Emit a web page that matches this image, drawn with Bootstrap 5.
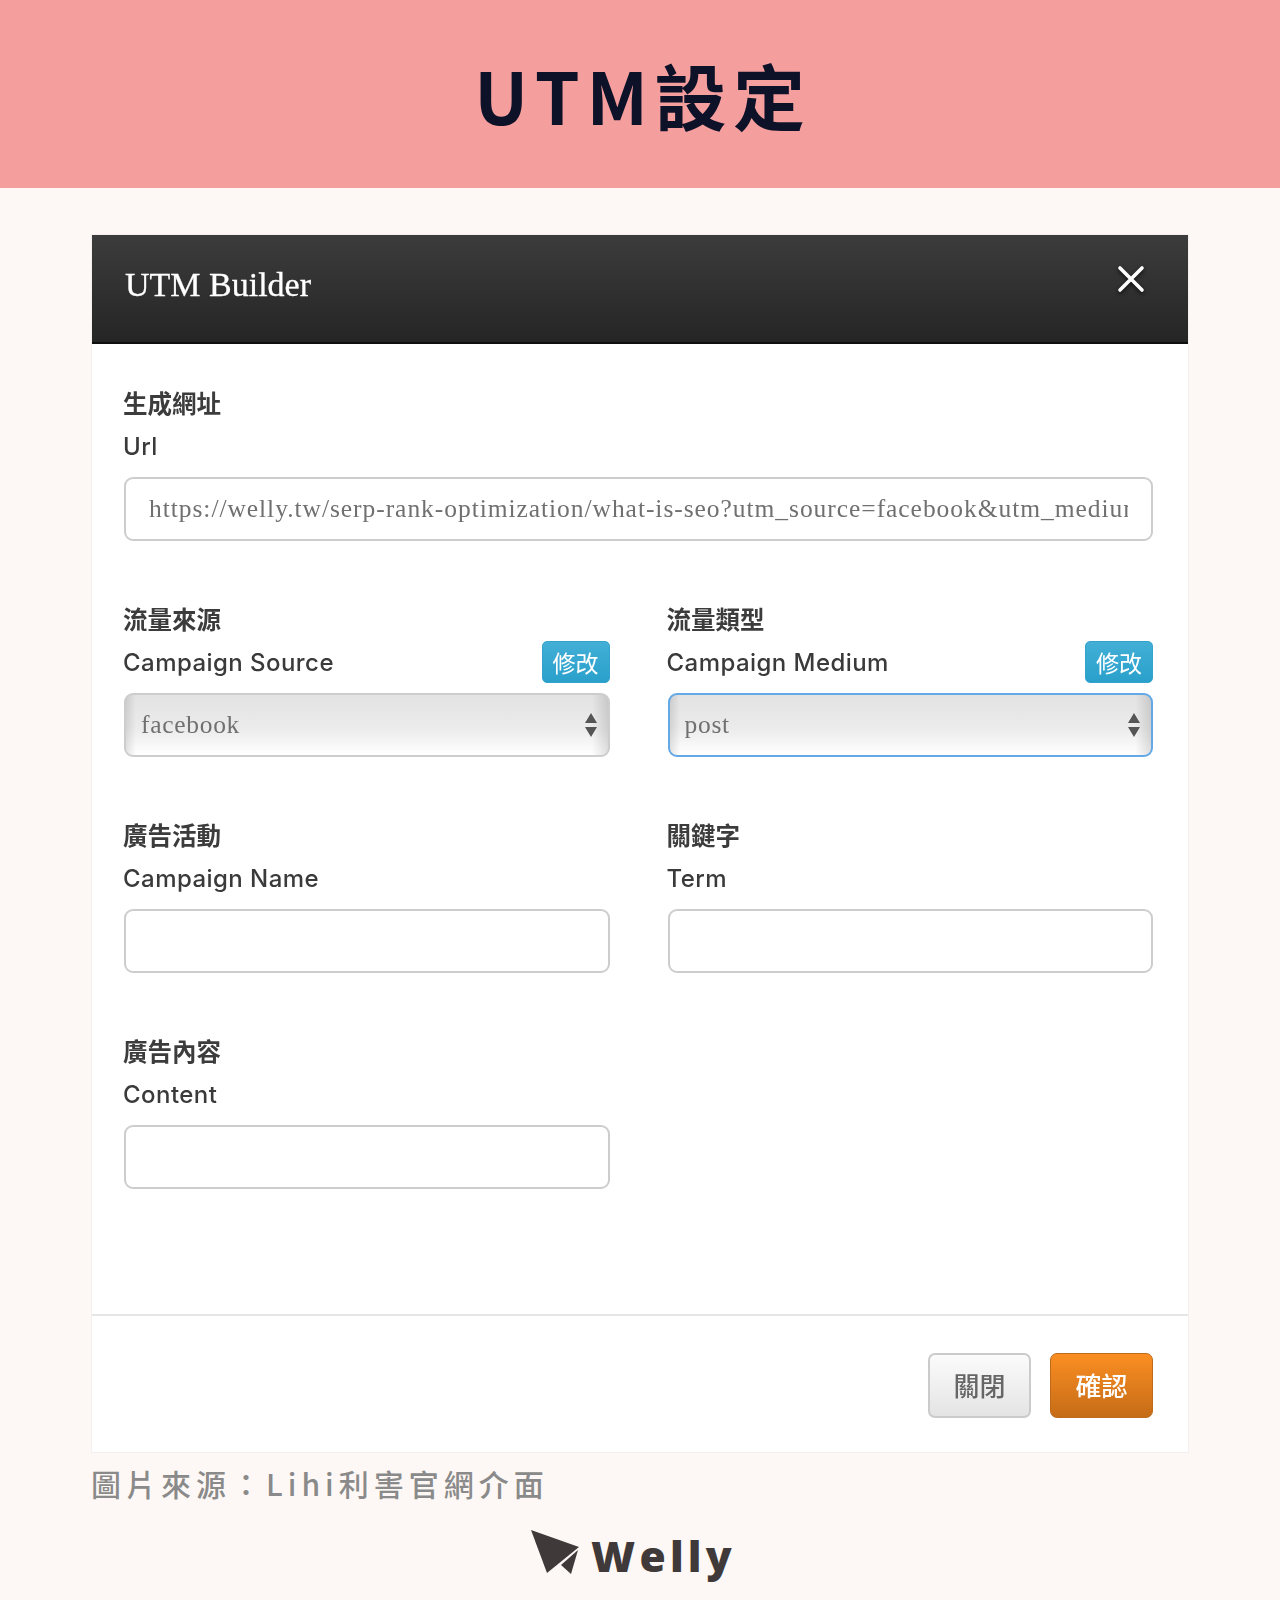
<!DOCTYPE html>
<html lang="zh-Hant">
<head>
<meta charset="utf-8">
<title>UTM設定</title>
<link href="https://cdn.jsdelivr.net/npm/bootstrap@5.3.0/dist/css/bootstrap.min.css" rel="stylesheet">
<style>
html,body{margin:0;height:1600px;overflow:hidden}
body{background:#fdf8f5;font-family:"Liberation Sans","Noto Sans CJK TC",sans-serif}
.banner{height:188px;padding-left:6px;background:#f59e9e;color:#0d1228;font-family:"Noto Sans CJK TC",sans-serif;font-weight:700;font-size:72px;letter-spacing:6.6px;line-height:1}
.card.sheet{width:1098px;margin:46px 0 0 91px;border:1px solid #f3efec;border-radius:0;background:#fff}
.sheet-blur{filter:blur(.5px)}
.sheet .card-header.sheet-head{height:109px;background:linear-gradient(#3c3c3c,#252525);border:0;border-bottom:2px solid #0f0f0f;border-radius:0;padding:25px 43px 0 33px;color:#fff}
.sheet-title{font-family:"Liberation Serif",serif;font-size:34px;line-height:50px;margin:0;letter-spacing:0;font-weight:400;-webkit-text-stroke:.3px #fff}
.x-btn{background:none;border:0;padding:0;margin-top:5px;width:28px;height:28px;line-height:0;filter:drop-shadow(0 2px 2px rgba(0,0,0,.7))}
.sheet-body{padding:38px 35px 68px 32px}
.gap-x{--bs-gutter-x:58px;--bs-gutter-y:0}
.field{margin-bottom:57px}
.zh-label{font-family:"Noto Sans CJK TC",sans-serif;font-weight:700;font-size:24.5px;line-height:42px;color:#3c3c3c;height:42px;margin-left:-1px}
.en-label{font-family:"Inter","Liberation Sans",sans-serif;font-weight:500;font-size:24px;line-height:46px;height:42px;color:#3a3a3a;letter-spacing:.45px;margin-left:-1px}
.label-row{height:53px}
.edit-btn{width:68px;height:42px;margin-top:1px;padding:0;background:linear-gradient(#43afd6,#29a0cb);border:1px solid #33a3cc;border-radius:5px;color:#fff;font-family:"Noto Sans CJK TC",sans-serif;font-size:23px;line-height:36px}
.edit-btn:hover{background:#29a0cb;color:#fff}
.tall-input.form-control,.tall-select.form-select{height:64px;border:2px solid #cdcdcd;border-radius:9px;font-family:"Liberation Serif",serif;font-size:25.5px;color:#707070;box-shadow:none}
.tall-input.form-control{padding:0 23px;letter-spacing:.95px;background:#fff}
.tall-select.form-select{padding:0 40px 0 15px;letter-spacing:.7px;background-color:#eee;background-image:url("data:image/svg+xml,%3Csvg xmlns='http://www.w3.org/2000/svg' width='12' height='24'%3E%3Cpath d='M6 0l6 10H0zM6 24L0 14h12z' fill='%23555'/%3E%3C/svg%3E"),linear-gradient(90deg,rgba(0,0,0,.1),transparent 10px,transparent calc(100% - 16px),rgba(0,0,0,.12)),linear-gradient(#e3e3e3,#ebebeb 55%,#fff);background-repeat:no-repeat;background-position:right 11px center,0 0,0 0;background-size:12px 24px,100% 100%,100% 100%}
.tall-select.hot.form-select{border-color:#62a9e6}
.sheet .card-footer.sheet-foot{background:#fff;border:0;border-top:2px solid #e6e6e6;border-radius:0;padding:37px 35px 34px 0;gap:19px}
.foot-btn{width:103px;height:65px;border-radius:7px;padding:0 0 3px;font-family:"Noto Sans CJK TC",sans-serif;font-size:26px;font-weight:500}
.foot-close{background:linear-gradient(#fbfbfb,#e4e4e4);border:2px solid #cbcbcb;color:#666}
.foot-ok{background:linear-gradient(#fb8e22,#c56c17);border:1px solid #bd6a1a;color:#fff}
.credit{margin:12px 0 0 91px;font-family:"Noto Sans CJK TC",sans-serif;font-weight:500;font-size:30px;line-height:36px;letter-spacing:5px;color:#8a8a8a}
.brand{margin-top:25px;gap:11px;color:#3f3a39;padding-right:14px}
.brand-name{font-family:"Open Sans",sans-serif;font-weight:800;font-size:42.5px;line-height:44px;letter-spacing:4.2px;padding-top:8px}
</style>
</head>
<body>
<header class="banner d-flex align-items-center justify-content-center">UTM設定</header>

<div class="card sheet sheet-blur">
  <div class="card-header sheet-head d-flex justify-content-between align-items-start">
    <h5 class="sheet-title">UTM Builder</h5>
    <button type="button" class="x-btn" aria-label="Close">
      <svg width="28" height="28" viewBox="0 0 28 28"><path d="M3 3l22 22M25 3L3 25" stroke="#fff" stroke-width="3.6" stroke-linecap="round" fill="none"/></svg>
    </button>
  </div>
  <div class="card-body sheet-body">
    <div class="field">
      <div class="zh-label">生成網址</div>
      <div class="label-row"><div class="en-label">Url</div></div>
      <input class="form-control tall-input" type="text" readonly value="https://welly.tw/serp-rank-optimization/what-is-seo?utm_source=facebook&amp;utm_medium=post">
    </div>
    <div class="row gap-x">
      <div class="col-6 field">
        <div class="zh-label">流量來源</div>
        <div class="label-row d-flex justify-content-between align-items-start"><div class="en-label">Campaign Source</div><button type="button" class="btn edit-btn">修改</button></div>
        <select class="form-select tall-select" disabled><option>facebook</option></select>
      </div>
      <div class="col-6 field">
        <div class="zh-label">流量類型</div>
        <div class="label-row d-flex justify-content-between align-items-start"><div class="en-label">Campaign Medium</div><button type="button" class="btn edit-btn">修改</button></div>
        <select class="form-select tall-select hot" disabled><option>post</option></select>
      </div>
      <div class="col-6 field">
        <div class="zh-label">廣告活動</div>
        <div class="label-row"><div class="en-label">Campaign Name</div></div>
        <input class="form-control tall-input" type="text">
      </div>
      <div class="col-6 field">
        <div class="zh-label">關鍵字</div>
        <div class="label-row"><div class="en-label">Term</div></div>
        <input class="form-control tall-input" type="text">
      </div>
      <div class="col-6 field">
        <div class="zh-label">廣告內容</div>
        <div class="label-row"><div class="en-label">Content</div></div>
        <input class="form-control tall-input" type="text">
      </div>
    </div>
  </div>
  <div class="card-footer sheet-foot d-flex justify-content-end">
    <button type="button" class="btn foot-btn foot-close">關閉</button>
    <button type="button" class="btn foot-btn foot-ok">確認</button>
  </div>
</div>

<p class="credit">圖片來源：Lihi利害官網介面</p>

<div class="brand d-flex justify-content-center align-items-center">
  <svg width="50" height="46" viewBox="0 0 50 46"><path d="M1 1L49 18 17 44z" fill="#3f3a39"/><path d="M48 21L41 45 31 36z" fill="#3f3a39"/></svg>
  <span class="brand-name">Welly</span>
</div>
</body>
</html>
